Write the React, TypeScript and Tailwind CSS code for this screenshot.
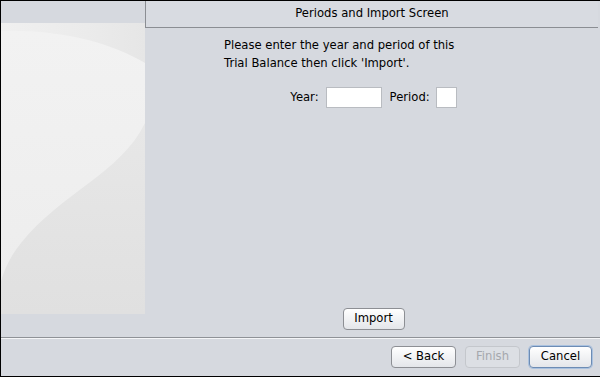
import React from 'react';

const font = { fontFamily: '"DejaVu Sans", "Liberation Sans", sans-serif' };

const SidePicture: React.FC = () => (
  <svg width="144" height="291" viewBox="0 0 144 291" className="block">
    <defs>
      <linearGradient id="base" x1="0" y1="0" x2="0" y2="1">
        <stop offset="0" stopColor="#ebebeb" />
        <stop offset="1" stopColor="#e0e0e0" />
      </linearGradient>
      <linearGradient id="top" x1="0" y1="0" x2="1" y2="0">
        <stop offset="0" stopColor="#f0f0f0" />
        <stop offset="0.6" stopColor="#ebebeb" />
        <stop offset="1" stopColor="#e6e6e6" />
      </linearGradient>
      <linearGradient id="band" x1="0" y1="0" x2="0" y2="1">
        <stop offset="0" stopColor="#f2f2f2" />
        <stop offset="1" stopColor="#ededed" />
      </linearGradient>
    </defs>
    <rect width="144" height="291" fill="url(#base)" />
    <path d="M0 0 H144 V40 C110 20 60 6 0 8 Z" fill="url(#top)" />
    <path d="M0 8 C60 6 110 20 144 40 V100 C120 150 60 170 20 220 C10 232 4 245 0 258 Z" fill="url(#band)" />
  </svg>
);

const Btn: React.FC<{ label: string; w: string; disabled?: boolean; primary?: boolean }> = ({ label, w, disabled, primary }) => (
  <button
    className={
      'h-[22px] rounded-[4px] border text-[11.6px] leading-none ' +
      w +
      (disabled
        ? ' border-[#c4c7cc] bg-[#dcdfe4] text-[#a5a8ad]'
        : primary
        ? ' border-[#6d8cb4] bg-gradient-to-b from-[#ffffff] to-[#e4e6ea] text-black shadow-[0_0_0_1px_#a9c1df]'
        : ' border-[#8d8f94] bg-gradient-to-b from-[#ffffff] to-[#e4e6ea] text-black')
    }
    style={font}
  >
    {label}
  </button>
);

export default function App() {
  return (
    <div
      className="w-[600px] h-[377px] flex flex-col border-l border-t border-b border-black bg-[#d6d9df] text-black"
      style={font}
    >
      <div className="flex h-[336px]">
        <div className="w-[144px] pt-[22px]">
          <SidePicture />
        </div>
        <div className="flex-1 flex flex-col">
          <div className="h-[27px] mr-[2px] border-l border-b border-[#8b8e93] bg-[#d8dbe1] flex items-center justify-center text-[11.6px]">
            Periods and Import Screen
          </div>
          <div className="flex-1 flex flex-col">
            <div className="pl-[79px] pt-[8px] text-[11.6px] leading-[18px]">
              <div>Please enter the year and period of this</div>
              <div>Trial Balance then click 'Import'.</div>
            </div>
            <div className="flex items-center justify-center mt-[15px] text-[11.6px] pl-[2px]">
              <span>Year:</span>
              <input className="ml-[7px] w-[56px] h-[21px] bg-white border border-[#b9bcc1] outline-none" />
              <span className="ml-[8px]">Period:</span>
              <input className="ml-[6px] w-[21px] h-[21px] bg-white border border-[#b9bcc1] outline-none" />
            </div>
            <div className="flex-1" />
            <div className="flex justify-center pb-[7px] pl-[2px]">
              <Btn label="Import" w="w-[62px]" />
            </div>
          </div>
        </div>
      </div>
      <div className="h-px bg-[#8f9297]" />
      <div className="h-px bg-[#f4f5f7]" />
      <div className="flex-1 flex items-start justify-end pt-[7px] pr-[8px] gap-[9px]">
        <Btn label="< Back" w="w-[65px]" />
        <Btn label="Finish" w="w-[55px]" disabled />
        <Btn label="Cancel" w="w-[63px]" primary />
      </div>
    </div>
  );
}
